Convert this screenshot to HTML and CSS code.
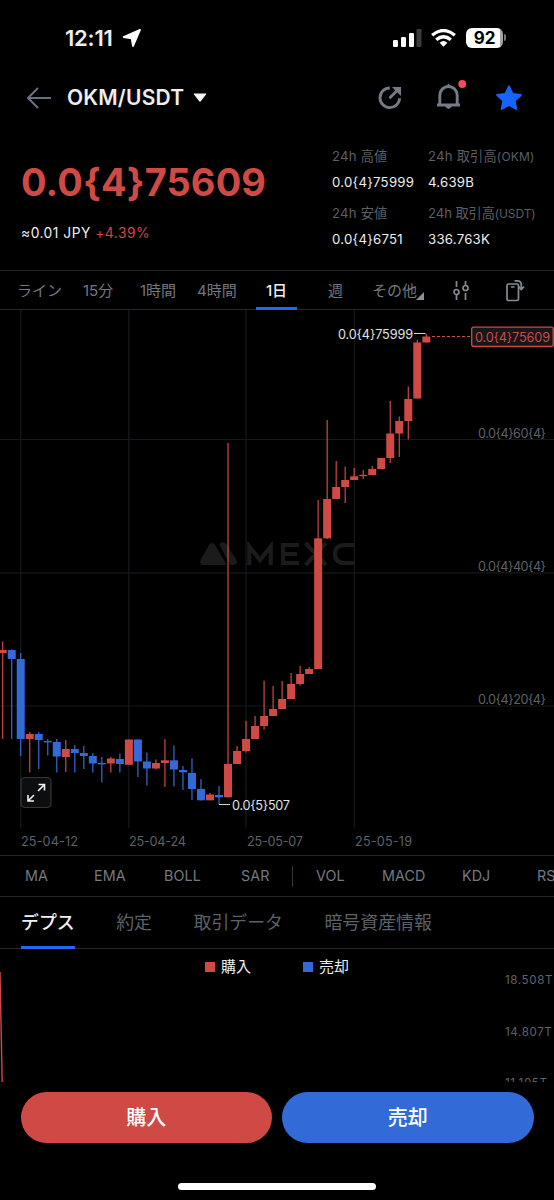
FILE: index.html
```
<!DOCTYPE html>
<html lang="ja">
<head>
<meta charset="utf-8">
<meta name="viewport" content="width=device-width, initial-scale=1">
<title>OKM/USDT</title>
<link rel="stylesheet" href="styles.css">
</head>
<body>
<div class="screen">
  <div class="status">
    <span class="clock">12:11</span>
    <svg class="loc" width="20" height="20" viewBox="0 0 20 20"><path d="M18 1.8 1.6 9 9.6 10.4 11 18.2Z" fill="#fff" stroke="#fff" stroke-width="1.8" stroke-linejoin="round"/></svg>
    <svg class="signal" width="29" height="18" viewBox="0 0 29 18"><rect x="0" y="11" width="5" height="7" rx="1.3" fill="#fff"/><rect x="8" y="8" width="5" height="10" rx="1.3" fill="#fff"/><rect x="16" y="4" width="5" height="14" rx="1.3" fill="#fff"/><rect x="23.5" y="0" width="5" height="18" rx="1.3" fill="#3b3b3d"/></svg>
    <svg class="wifi" width="25" height="18" viewBox="0 0 25 18" fill="none" stroke="#fff" stroke-width="3.4"><path d="M1.2 6.2Q12.5-3.1 23.8 6.2"/><path d="M5.2 10.8Q12.5 4.8 19.8 10.8"/><path d="M8.6 13.7Q12.5 10.5 16.4 13.7L12.5 17.7Z" fill="#fff" stroke="none"/></svg>
    <span class="battery">92</span><span class="cap"></span>
  </div>

  <header class="header">
    <svg width="26" height="22" viewBox="0 0 26 22" fill="none" stroke="#687080" stroke-width="2"><path d="M25 11H2M12 1 2 11 12 21"/></svg>
    <h1>OKM/USDT</h1>
    <svg class="caret" width="14" height="10" viewBox="0 0 14 10"><path d="M1 .5H13Q13.6.7 13 1.4L7.6 8.5Q7 9 6.4 8.5L1 1.4Q.4.7 1 .5Z" fill="#f4f5f7"/></svg>
    <svg class="share" width="26" height="26" viewBox="0 0 26 26" fill="none" stroke="#737b87" stroke-width="2.9"><path d="M12.8 3A9.8 9.8 0 1 0 22.6 13.2M12.4 13.3 20 5.7"/><path d="M15 2H24V11Z" fill="#737b87" stroke="none"/></svg>
    <svg class="bell" width="30" height="33" viewBox="0 0 30 33"><path d="M3.8 25V17C3.8 4.4 21.2 4.4 21.2 17V25M1 26H24" fill="none" stroke="#737b87" stroke-width="2.9"/><path d="M9.5 8 12.5 4.5 15.5 8ZM9 27Q12.5 33 16 27Z" fill="#737b87"/><circle cx="26.2" cy="5" r="3.9" fill="#ff4562"/></svg>
    <svg class="star" width="28" height="28" viewBox="0 0 28 28"><path d="M14 2.3 17.5 10 25.8 11 19.7 16.7 21.2 25 14 21 6.8 25 8.3 16.7 2.2 11 10.5 10Z" fill="#1763ff" stroke="#1763ff" stroke-width="2" stroke-linejoin="round"/></svg>
  </header>

  <section class="ticker">
    <div class="price-block">
      <div class="price">0.0{4}75609</div>
      <div class="fiat">≈0.01 JPY <span class="up">+4.39%</span></div>
    </div>
    <dl class="stats">
      <div><dt>24h 高値</dt><dd>0.0{4}75999</dd></div>
      <div><dt>24h 取引高<small>(OKM)</small></dt><dd>4.639B</dd></div>
      <div><dt>24h 安値</dt><dd>0.0{4}6751</dd></div>
      <div><dt class="tight">24h 取引高<small>(USDT)</small></dt><dd>336.763K</dd></div>
    </dl>
  </section>

  <nav class="intervals">
    <span>ライン</span><span>15分</span><span>1時間</span><span>4時間</span><span class="active">1日</span><span>週</span>
    <span class="more">その他<svg width="8" height="8" viewBox="0 0 8 8"><path d="M8 0V8H0Z" fill="#8a8f99"/></svg></span>
    <svg width="18" height="22" viewBox="0 0 18 22" fill="none" stroke="#858b95" stroke-width="1.7"><path d="M4.5 1V7M4.5 15V20M13.5 1V5M13.5 13V20"/><circle cx="4.5" cy="12" r="2.5"/><circle cx="13.5" cy="8" r="2.5"/></svg>
    <svg width="20" height="24" viewBox="0 0 20 24" fill="none" stroke="#858b95" stroke-width="1.7"><rect x="2" y="5" width="11.5" height="16.5" rx="1.5"/><path d="M6 8H9.5M9.5 1.8H13Q16.3 2 16.3 6V10M13.5 7.7 16.3 10.5 19 7.7"/></svg>
  </nav>

  <section class="chart">
    <svg id="candles" width="554" height="545" viewBox="0 310 554 545">
      <g stroke="#17191d" stroke-width="1.2"><path d="M20.7 310V828M128.8 310V828M246 310V828M354.3 310V828M0 439.5H554M0 572.8H554M0 706H554"/></g>
      <g fill="#1b1b1c">
        <path d="M202 565Q199 563 201 559L209 545Q212 541 215 545L227 565ZM219 544Q224 540 227 545L236 559Q239 564 234 565L230 565Z"/>
        <g fill="none" stroke="#1b1b1c" stroke-width="4.2"><path d="M249.3 565V546.5L260 560 270.7 546.5V565M299 545H283V563H299M283 554H297M305.5 543 326 565M326 543 305.5 565M354.5 545H345Q335 545 335 554Q335 563 345 563H354.5"/></g>
      </g>
      <g id="series"></g>
      <path d="M414 333.5H425.5M219 804.5H230" stroke="#d5d6d8" stroke-width="1.2"/>
      <path d="M432 336.5H471" stroke="#cf4945" stroke-width="1.2" stroke-dasharray="3 2"/>
      <g class="mark"><text x="338" y="338.5" textLength="75">0.0{4}75999</text><text x="232" y="810" textLength="58">0.0{5}507</text></g>
      <g class="axis"><text x="478" y="437.5" textLength="68">0.0{4}60{4}</text><text x="478" y="570.5" textLength="68">0.0{4}40{4}</text><text x="478" y="703.5" textLength="68">0.0{4}20{4}</text>
      <text x="21" y="846" textLength="57">25-04-12</text><text x="129" y="846" textLength="57">25-04-24</text><text x="247" y="846" textLength="56">25-05-07</text><text x="355" y="846" textLength="57">25-05-19</text></g>
      <rect x="471.7" y="327.2" width="81.5" height="19.3" rx="2" fill="#15171b" stroke="#cf4945" stroke-width="1.3"/>
      <text class="last" x="475" y="342" textLength="75">0.0{4}75609</text>
      <rect x="21" y="777.5" width="30" height="30" rx="4" fill="#0d0e10" stroke="#34363a" stroke-width="1.2"/>
      <path d="M38 791 44 785M38.5 784.5H44.5V790.5M34 795 28 801M28 795V801H34" fill="none" stroke="#f0f0f0" stroke-width="1.6"/>
    </svg>
  </section>

  <nav class="indicators"><span>MA</span><span>EMA</span><span>BOLL</span><span>SAR</span><i></i><span>VOL</span><span>MACD</span><span>KDJ</span><span>RS</span></nav>

  <nav class="tabs"><span class="active">デプス</span><span>約定</span><span>取引データ</span><span>暗号資産情報</span></nav>

  <section class="depth">
    <div class="legend"><span class="buy-key">購入</span><span class="sell-key">売却</span></div>
    <div class="plot">
      <svg width="10" height="112" viewBox="0 0 10 112"><path d="M0 1 2.2 112" fill="none" stroke="#cf4945" stroke-width="1.4"/></svg>
      <div class="levels"><span>18.508T</span><span>14.807T</span><span>11.105T</span></div>
    </div>
  </section>

  <footer class="actions"><button class="buy">購入</button><button class="sell">売却</button></footer>
  <div class="home"></div>
</div>
<script src="chart.js"></script>
</body>
</html>
```
FILE: styles.css
```
* { box-sizing: border-box; }
body { margin: 0; background: #000; }
.screen {
  width: 554px; height: 1200px; overflow: hidden;
  display: flex; flex-direction: column;
  background: #000; color: #eceef0;
  font-family: Inter, "Noto Sans CJK JP", sans-serif;
}
.screen svg { flex: none; display: block; }

.status { height: 60px; padding: 15px 0 0 65px; display: flex; align-items: center; flex: none; }
.clock { width: 55px; font-size: 22px; font-weight: 600; letter-spacing: -.2px; white-space: nowrap; }
.loc { margin-left: 2px; }
.signal { margin-left: 251px; }
.wifi { margin-left: 9px; }
.battery {
  margin-left: 10px; width: 37px; height: 20px; border-radius: 6px;
  background: linear-gradient(90deg, #fff 34px, #a5a5a5 34px);
  color: #000; font-size: 17px; font-weight: 700; line-height: 20px; text-align: center;
}
.cap { width: 2px; height: 7px; margin-left: 1px; border-radius: 0 2px 2px 0; background: #77777a; }

.header { height: 75px; padding-left: 26px; display: flex; align-items: center; flex: none; }
.header h1 { margin: 0 0 0 15px; width: 118px; font-size: 21px; font-weight: 600; letter-spacing: .2px; white-space: nowrap; }
.caret { margin-left: 8px; }
.share { margin-left: 170px; }
.bell { margin: 0 0 4px 33px; }
.star { margin-left: 29px; }

.ticker { height: 135px; display: flex; flex: none; }
.price-block { width: 332px; padding: 23px 0 0 21px; }
.price { height: 48px; line-height: 48px; font-size: 38px; font-weight: 700; letter-spacing: .1px; color: #cf4945; white-space: nowrap; }
.fiat { margin-top: 17px; line-height: 20px; font-size: 13.8px; letter-spacing: .5px; white-space: nowrap; }
.up { color: #cf4945; }
.stats {
  margin: 0; padding-top: 12px; flex: 1;
  display: grid; grid-template-columns: 96px 1fr; grid-auto-rows: 57px; white-space: nowrap;
}
.stats dt { height: 19px; line-height: 19px; font-size: 13.2px; letter-spacing: .2px; color: #5c5e66; }
.stats .tight { letter-spacing: -.1px; }
.stats small { font-size: 12px; }
.stats dd { margin: 6px 0 0; line-height: 20px; font-size: 13.2px; letter-spacing: .25px; }

.intervals {
  height: 40px; flex: none; align-items: center;
  border: solid #25272a; border-width: 1px 0;
  display: grid; grid-template-columns: 66px 57px 57px 59px 72px 44px 80px 53px 1fr;
  padding-left: 17px; font-size: 15px; color: #737780; white-space: nowrap;
}
.intervals > span:not(.active) { padding-bottom: 2px; }
.intervals .active { width: 41px; height: 39px; line-height: 40px; text-align: center; color: #f0f1f3; font-weight: 500; border-bottom: 3px solid #2468f2; }
.more { display: flex; align-items: flex-end; }
.more svg { margin: 0 0 0 -1px; }

.chart { height: 545px; flex: none; }
.chart text { font-size: 12.7px; }
.axis { fill: #5e6067; }
.mark { fill: #e1e2e4; }
.last { fill: #cf4945; }

.indicators {
  height: 42px; flex: none; align-items: center;
  border: solid #25272a; border-width: 1px 0;
  display: grid; grid-template-columns: 69px 70px 77px 51px 24px 66px 80px 75px 30px;
  padding-left: 25px; font-size: 14.3px; letter-spacing: .1px; color: #747984; white-space: nowrap;
}
.indicators span { padding-bottom: 2px; }
.indicators i { width: 1px; height: 21px; background: #34373c; }

.tabs {
  height: 52px; flex: none; display: flex; gap: 41.5px; padding-left: 21px;
  border-bottom: 1px solid #25272a;
  font-size: 17.9px; line-height: 51px; color: #5c6069; white-space: nowrap;
}
.tabs .active { height: 52px; color: #f0f1f3; font-weight: 500; border-bottom: 3px solid #2468f2; }

.depth { height: 133px; flex: none; overflow: hidden; }
.legend { height: 22px; display: flex; gap: 52px; padding: 7px 0 0 205px; font-size: 15px; line-height: 22px; }
.legend span { display: flex; align-items: center; gap: 6px; height: 22px; }
.legend span::before { content: ""; width: 10px; height: 10px; background: #cf4945; }
.legend .sell-key::before { background: #326bd7; }
.plot { display: flex; justify-content: space-between; }
.levels { width: 49px; font-size: 11.6px; letter-spacing: .6px; color: #606269; white-space: nowrap; }
.levels span { display: block; height: 51.5px; line-height: 18px; }

.actions { flex: none; height: 62px; padding: 10px 20.5px 0; display: flex; gap: 10px; }
.actions button {
  flex: 1; height: 51px; padding: 0; border: 0; border-radius: 26px;
  color: #fff; font: 500 20px/53px Inter, "Noto Sans CJK JP", sans-serif;
}
.buy { background: #cf4945; }
.sell { background: #326bd7; }
.home { flex: none; width: 198px; height: 7px; margin: 39px 0 0 178px; border-radius: 4px; background: #fff; }
```
FILE: chart.js
```
// One entry per day: direction, wick top, wick bottom, body top, body bottom.
const days = [
  ["r",641.5,739,650,653],["b",649.5,739,650,659],["b",653,756,659,739],["r",732,772.5,734,739],
  ["b",732,769,734,740],["b",739,755.5,741,742.4],["b",739,772.5,742,756.5],["r",740,772,749,757],
  ["b",745,772.5,749,753],["b",746,769,753,756],["b",753,772.5,756,763.5],["b",757,782.5,763,764.4],
  ["r",757,772.5,758.5,763.5],["b",753.5,772.5,759,764],["r",739.5,764.8,739.5,764.8],["b",739.5,777,739.5,761.5],
  ["b",752.5,785.5,761.5,768.5],["r",759.5,769.5,763,768.5],["r",739,787,760.3,763],["b",745.5,786.5,760.3,769.5],
  ["b",766,790,770,772.3],["b",758.5,800,773,789],["b",779,800.5,789,800.3],["r",793,800.3,794.5,800.3],
  ["b",786,804.5,795,797.3],["r",443,797.3,764,797.3],["r",746,764,751,764],["r",721,752.5,739,751],
  ["r",716,739,726,739],["r",680.7,729.5,716,726],["r",686,716,709,716],["r",681,709,699,709],
  ["r",673,699,684,699],["r",666,685.5,674,684],["r",667,674,669,674],["r",500,669,538.3,669],
  ["r",420,539,499,538.3],["r",461,499,487,499],["r",466.5,503,480,487],["r",468,480,476.3,480],
  ["r",470,479,474.8,476.2],["r",466,475,469,475],["r",458,469,458,469],["r",401,463,433.5,458],
  ["r",416.5,457,421,433.5],["r",386.5,439.5,399,421],["r",340,398.5,342.5,398.5],["r",334,342.5,336.5,342.5]
];
const ns = "http://www.w3.org/2000/svg";
const series = document.getElementById("series");
function bar(x, y, w, h, fill) {
  const r = document.createElementNS(ns, "rect");
  Object.entries({ x, y, width: w, height: h, fill }).forEach(([k, v]) => r.setAttribute(k, v));
  series.appendChild(r);
}
days.forEach(([dir, high, low, top, bottom], i) => {
  const x = 2.7 + i * 9.013;
  const fill = dir === "r" ? "#cf4945" : "#326bd7";
  bar(x - 0.6, high, 1.2, low - high, fill);
  bar(x - 4, top, 8, bottom - top, fill);
});
```
